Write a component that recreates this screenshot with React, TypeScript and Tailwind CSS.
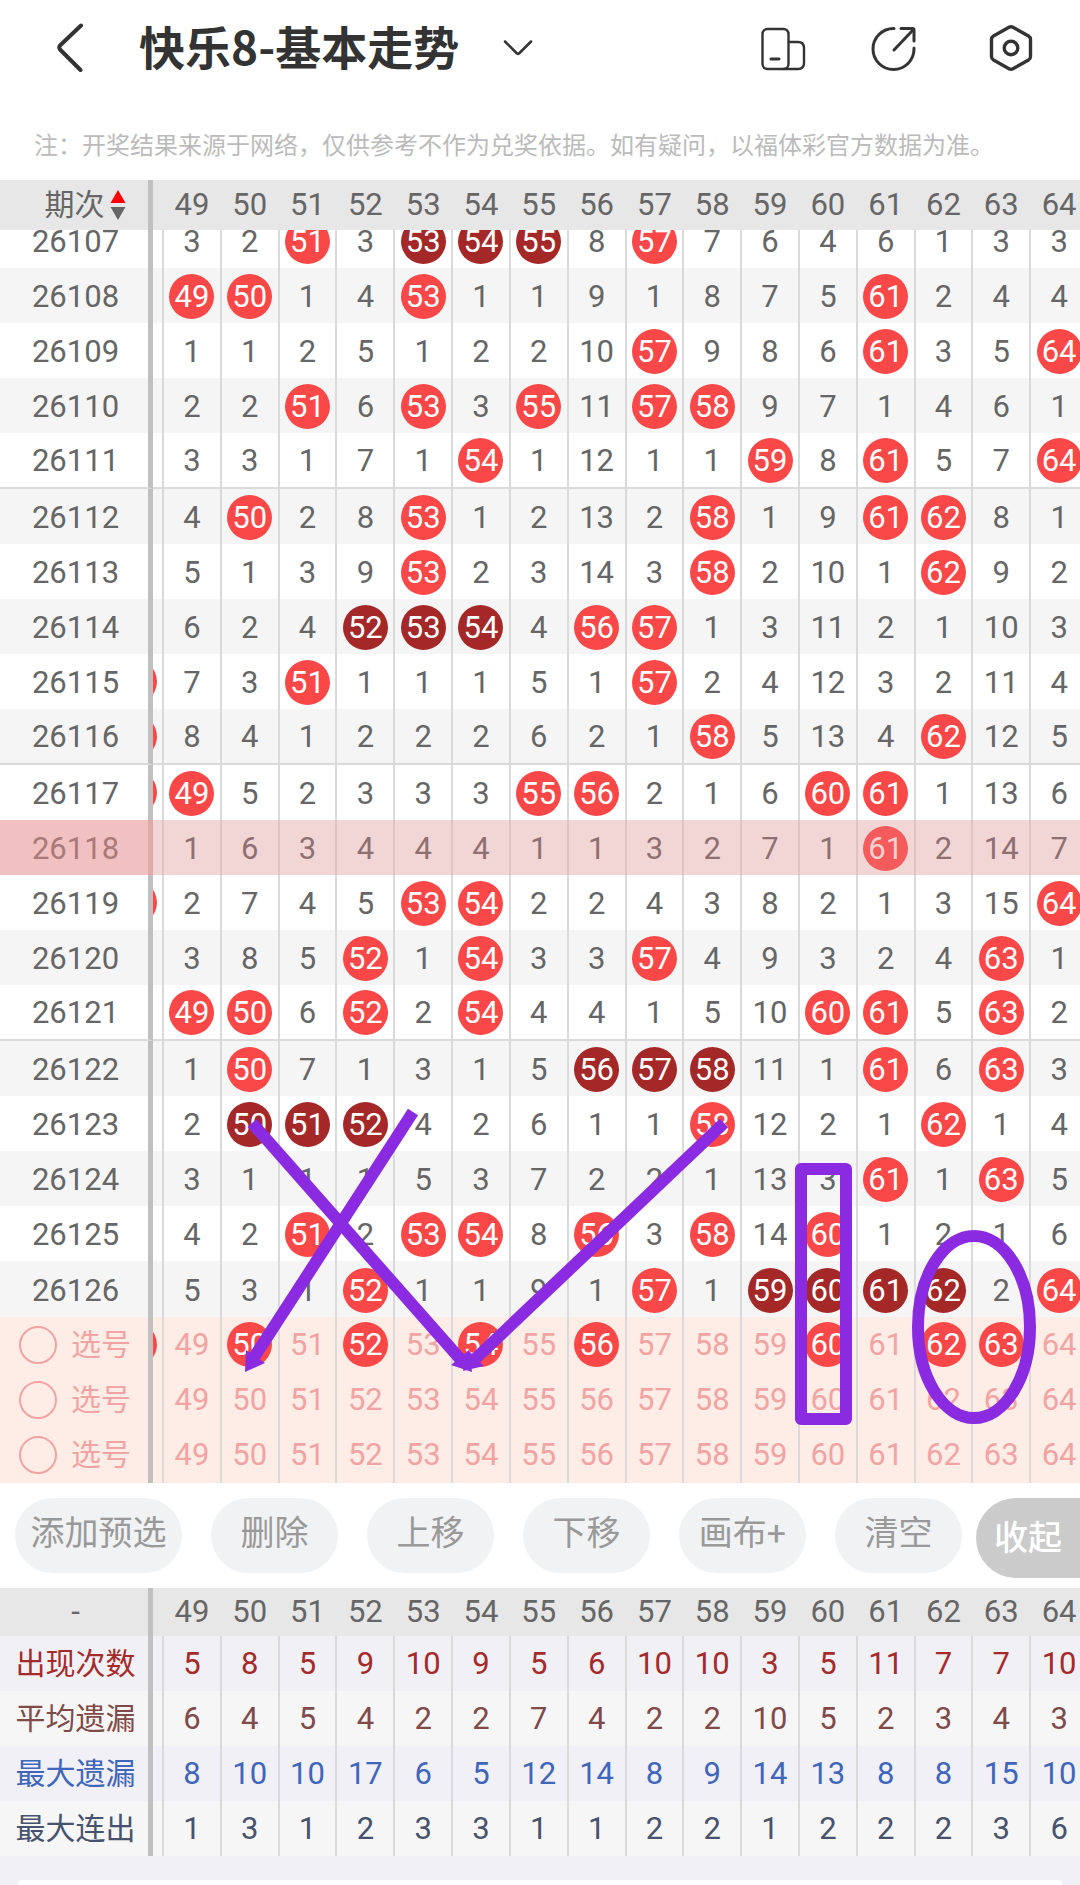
import { useState } from "react";
import clsx from "clsx";

const COLUMNS = [49, 50, 51, 52, 53, 54, 55, 56, 57, 58, 59, 60, 61, 62, 63, 64];

type Draw = { issue: string; cells: string; prevHit?: boolean };

// R = drawn number, D = drawn as part of a run of three or more
const DRAWS: Draw[] = [
  { issue: "26107", cells: "3 2 R 3 D D D 8 R 7 6 4 6 1 3 3" },
  { issue: "26108", cells: "R R 1 4 R 1 1 9 1 8 7 5 R 2 4 4" },
  { issue: "26109", cells: "1 1 2 5 1 2 2 10 R 9 8 6 R 3 5 R" },
  { issue: "26110", cells: "2 2 R 6 R 3 R 11 R R 9 7 1 4 6 1" },
  { issue: "26111", cells: "3 3 1 7 1 R 1 12 1 1 R 8 R 5 7 R" },
  { issue: "26112", cells: "4 R 2 8 R 1 2 13 2 R 1 9 R R 8 1" },
  { issue: "26113", cells: "5 1 3 9 R 2 3 14 3 R 2 10 1 R 9 2" },
  { issue: "26114", cells: "6 2 4 D D D 4 R R 1 3 11 2 1 10 3" },
  { issue: "26115", cells: "7 3 R 1 1 1 5 1 R 2 4 12 3 2 11 4", prevHit: true },
  { issue: "26116", cells: "8 4 1 2 2 2 6 2 1 R 5 13 4 R 12 5", prevHit: true },
  { issue: "26117", cells: "R 5 2 3 3 3 R R 2 1 6 R R 1 13 6", prevHit: true },
  { issue: "26118", cells: "1 6 3 4 4 4 1 1 3 2 7 1 R 2 14 7" },
  { issue: "26119", cells: "2 7 4 5 R R 2 2 4 3 8 2 1 3 15 R", prevHit: true },
  { issue: "26120", cells: "3 8 5 R 1 R 3 3 R 4 9 3 2 4 R 1" },
  { issue: "26121", cells: "R R 6 R 2 R 4 4 1 5 10 R R 5 R 2" },
  { issue: "26122", cells: "1 R 7 1 3 1 5 D D D 11 1 R 6 R 3" },
  { issue: "26123", cells: "2 D D D 4 2 6 1 1 R 12 2 1 R 1 4" },
  { issue: "26124", cells: "3 1 1 1 5 3 7 2 2 1 13 3 R 1 R 5" },
  { issue: "26125", cells: "4 2 R 2 R R 8 R 3 R 14 R 1 2 1 6" },
  { issue: "26126", cells: "5 3 1 R 1 1 9 1 R 1 D D D D 2 R" },
];

const STATS = [
  { label: "出现次数", color: "text-[#a52a2a]", bg: "bg-[#f1f0f5]", values: [5, 8, 5, 9, 10, 9, 5, 6, 10, 10, 3, 5, 11, 7, 7, 10] },
  { label: "平均遗漏", color: "text-[#804a48]", bg: "bg-[#f6f6f6]", values: [6, 4, 5, 4, 2, 2, 7, 4, 2, 2, 10, 5, 2, 3, 4, 3] },
  { label: "最大遗漏", color: "text-[#3f66ba]", bg: "bg-[#f0f0f6]", values: [8, 10, 10, 17, 6, 5, 12, 14, 8, 9, 14, 13, 8, 8, 15, 10] },
  { label: "最大连出", color: "text-[#48526c]", bg: "bg-[#f6f6f6]", values: [1, 3, 1, 2, 3, 3, 1, 1, 2, 2, 1, 2, 2, 2, 3, 6] },
];

const ACTIONS = ["删除", "上移", "下移", "画布+", "清空"];

const HIGHLIGHTED = "26118";

const TABLE = "w-[calc(100%+7px)] table-fixed border-separate border-spacing-0 text-center text-[31px] leading-9";

const ColGroup = () => (
  <colgroup>
    <col className="w-[153px]" />
    <col className="w-[9px]" />
    {COLUMNS.map((n) => (
      <col key={n} />
    ))}
  </colgroup>
);

const Ball = ({ n, dark, faded }: { n: number; dark?: boolean; faded?: boolean }) => (
  <span
    className={clsx(
      "flex size-[45px] shrink-0 items-center justify-center rounded-full",
      dark ? "bg-[#a52828]" : faded ? "bg-[#f35b5c]" : "bg-[#fa4848]",
      faded ? "text-[#fad0d0]" : "text-white"
    )}
  >
    {n}
  </span>
);

// Right edge of the ball in column 48, which is scrolled under the first column
const PrevBall = () => (
  <div className="flex justify-end overflow-hidden pr-[5px]">
    <span className="size-[45px] shrink-0 rounded-full bg-[#fa4848]" />
  </div>
);

const Header = () => (
  <header className="flex h-24 items-center justify-between pr-[46px] pl-[54px] text-[#333]">
    <div className="flex items-center">
      <button type="button" aria-label="返回">
        <svg width="32" height="50" viewBox="0 0 32 50" fill="none" stroke="currentColor" strokeWidth="4" strokeLinecap="round" strokeLinejoin="round">
          <path d="M27 2.500L6 22.500Q4.500 24.500 6 26.500L26.500 47" />
        </svg>
      </button>
      <h1 className="ml-[53px] pb-[6px] text-[46px] leading-[60px] font-bold">快乐8-基本走势</h1>
      <button type="button" aria-label="切换走势" className="ml-11">
        <svg width="30" height="18" viewBox="0 0 30 18" fill="none" stroke="currentColor" strokeWidth="2.500" strokeLinecap="round" strokeLinejoin="round">
          <path d="M2 2.500L14 14.500Q15 15.300 16 14.500L28 2.500" />
        </svg>
      </button>
    </div>
    <div className="flex items-center gap-16">
      <button type="button" aria-label="横屏">
        <svg width="46" height="48" viewBox="0 0 46 48" fill="none" stroke="currentColor" strokeWidth="2.400" strokeLinecap="round">
          <rect x="2.500" y="5" width="26" height="40" rx="5" />
          <path d="M29 18H38Q44 18 44 24V39Q44 45 38 45H24" />
          <path d="M11 35H19" strokeWidth="3" />
        </svg>
      </button>
      <button type="button" aria-label="分享">
        <svg width="46" height="48" viewBox="0 0 46 48" fill="none" stroke="currentColor" strokeWidth="3" strokeLinecap="round" strokeLinejoin="round">
          <path d="M24 4.500H23.500A20.500 20.500 0 1 0 44 25V24" />
          <path d="M31 4.500H42.500Q44 4.500 44 6V17" />
          <path d="M43 6L24 26" />
        </svg>
      </button>
      <button type="button" aria-label="设置" className="ml-2">
        <svg width="46" height="48" viewBox="0 0 46 48" fill="none" stroke="currentColor" strokeWidth="3.400" strokeLinejoin="round">
          <path d="M21 3.300Q23 2.200 25 3.300L40.500 12Q42.500 13.200 42.500 15.500V32.500Q42.500 34.800 40.500 36L25 44.700Q23 45.800 21 44.700L5.500 36Q3.500 34.800 3.500 32.500V15.500Q3.500 13.200 5.500 12Z" />
          <circle cx="23" cy="24" r="6.800" />
        </svg>
      </button>
    </div>
  </header>
);

const TrendRow = ({ draw, index }: { draw: Draw; index: number }) => {
  const active = draw.issue === HIGHLIGHTED;
  const groupEnd = index % 5 === 4;
  const ruled = groupEnd && index < DRAWS.length - 1;
  // the first row is partly scrolled under the header
  const height = index === 0 ? "h-[38px]" : ruled ? "h-[54px]" : groupEnd ? "h-14" : "h-[55px]";
  const rule = ruled && "border-b-2 border-b-[#dadada]";

  return (
    <tr className={clsx(active ? "bg-[#f2d6d6] text-[#8f7072]" : index % 2 ? "bg-[#f5f5f5]" : "bg-white")}>
      <th
        scope="row"
        className={clsx(
          "border-r-[5px] p-0 pl-[3px] font-normal",
          active ? "border-r-[#dea9a9] bg-[#f1c0c0] text-[#a87a7a]" : "border-r-[#c0c0c0]",
          rule
        )}
      >
        <div className={clsx("flex items-end justify-center overflow-hidden", height)}>
          <span className="flex h-[53px] shrink-0 items-center">{draw.issue}</span>
        </div>
      </th>
      <td className={clsx("p-0", rule)}>{draw.prevHit && <PrevBall />}</td>
      {draw.cells.split(" ").map((value, i) => (
        <td key={COLUMNS[i]} className={clsx("border-l-2 p-0", active ? "border-l-[#dfc2c2]" : "border-l-[#dadada]", rule)}>
          <div className={clsx("flex items-end justify-center overflow-hidden", height)}>
            <span className="flex h-[53px] shrink-0 items-center">
              {value === "R" || value === "D" ? <Ball n={COLUMNS[i]} dark={value === "D"} faded={active} /> : value}
            </span>
          </div>
        </td>
      ))}
    </tr>
  );
};

const PickRow = ({ index, picked, onToggle }: { index: number; picked: number[]; onToggle: (n: number) => void }) => (
  <tr className="bg-[#feede6] text-[#f2a3a3]">
    <th scope="row" className={clsx("border-r-[5px] border-r-[#c0c0c0] p-0 font-normal", index === 2 ? "h-14" : "h-[55px]")}>
      <label className="flex items-center gap-[14px] pl-[19px] text-[30px]">
        <input type="radio" name="pick" className="size-[38px] appearance-none rounded-full border-2 border-[#f2a3a3]" />
        选号
      </label>
    </th>
    <td className="p-0">{index === 0 && <PrevBall />}</td>
    {COLUMNS.map((n) => (
      <td key={n} className="border-l-2 border-l-[#dadada] p-0">
        <button type="button" className="flex w-full items-center justify-center" onClick={() => onToggle(n)}>
          {picked.includes(n) ? <Ball n={n} /> : n}
        </button>
      </td>
    ))}
  </tr>
);

// Lines drawn by hand on the canvas above the chart
const Annotations = () => (
  <svg className="pointer-events-none absolute inset-0 size-full" fill="none" stroke="#8a2be2" strokeWidth="12" aria-hidden="true">
    <path d="M252 943L462 1181" />
    <path d="M413 932L253 1179" />
    <path d="M724 943L473 1181" />
    <g fill="#8a2be2" stroke="none">
      <path d="M472 1192L451 1185L469 1170Z" />
      <path d="M245 1192L246 1170L265 1183Z" />
      <path d="M463 1191L468 1170L484 1186Z" />
    </g>
    <rect x="801" y="989" width="45" height="250" strokeLinejoin="round" />
    <ellipse cx="974" cy="1147" rx="56" ry="91" />
  </svg>
);

const App = () => {
  const [picks, setPicks] = useState<number[][]>([[50, 52, 54, 56, 60, 62, 63], [], []]);

  const toggle = (row: number, n: number) =>
    setPicks((prev) => prev.map((p, i) => (i !== row ? p : p.includes(n) ? p.filter((x) => x !== n) : [...p, n])));

  return (
    <div className="flex min-h-screen flex-col overflow-hidden bg-[#f0f0f6] font-[Roboto,'Noto_Sans_CJK_SC',sans-serif] text-[#666]">
      <div className="bg-white font-['Noto_Sans_CJK_SC',sans-serif]">
        <Header />
        <p className="h-[84px] pt-[30px] pl-[34px] text-2xl leading-9 whitespace-nowrap text-[#bbb]">
          注：开奖结果来源于网络，仅供参考不作为兑奖依据。如有疑问，以福体彩官方数据为准。
        </p>
      </div>

      {/* Trend chart */}
      <div className="relative">
        <table className={TABLE}>
          <ColGroup />
          <thead>
            <tr className="h-[50px] bg-[#e7e7e7]">
              <th scope="col" className="border-r-[5px] border-r-[#c0c0c0] p-0 font-normal">
                <button type="button" className="mx-auto flex items-center gap-[5px] pl-[22px] text-[30px]">
                  期次
                  <svg width="16" height="32" viewBox="0 0 16 32" className="shrink-0">
                    <path d="M8 1L15.500 14H0.500Z" fill="#f00" />
                    <path d="M8 31L15.500 18H0.500Z" fill="#666" />
                  </svg>
                </button>
              </th>
              <td className="p-0" />
              {COLUMNS.map((n) => (
                <th key={n} scope="col" className="border-l-2 border-l-transparent p-0 font-normal">
                  {n}
                </th>
              ))}
            </tr>
          </thead>
          <tbody>
            {DRAWS.map((draw, i) => (
              <TrendRow key={draw.issue} draw={draw} index={i} />
            ))}
            {picks.map((picked, i) => (
              <PickRow key={i} index={i} picked={picked} onToggle={(n) => toggle(i, n)} />
            ))}
          </tbody>
        </table>
        <Annotations />
      </div>

      {/* Actions */}
      <div className="flex h-[105px] items-start justify-between bg-white pt-[15px] pl-[15px] text-[34px] text-[#999]">
        <div className="flex gap-[29px]">
          <button type="button" className="h-[75px] w-[167px] rounded-full bg-[#f1f2f4] pb-1 whitespace-nowrap">
            添加预选
          </button>
          {ACTIONS.map((name) => (
            <button key={name} type="button" className="h-[75px] w-[127px] rounded-full bg-[#f1f2f4] pb-1 whitespace-nowrap">
              {name}
            </button>
          ))}
        </div>
        <button type="button" className="h-20 w-[104px] rounded-l-full bg-[#cbcbcb] font-medium whitespace-nowrap text-white">
          收起
        </button>
      </div>

      {/* Statistics */}
      <table className={TABLE}>
        <ColGroup />
        <thead>
          <tr className="h-12 bg-[#e7e7e7]">
            <th scope="col" className="border-r-[5px] border-r-[#c0c0c0] p-0 pl-[3px] font-normal">
              -
            </th>
            <td className="p-0" />
            {COLUMNS.map((n) => (
              <th key={n} scope="col" className="border-l-2 border-l-transparent p-0 font-normal">
                {n}
              </th>
            ))}
          </tr>
        </thead>
        <tbody>
          {STATS.map((stat) => (
            <tr key={stat.label} className={clsx("h-[55px]", stat.bg, stat.color)}>
              <th scope="row" className="border-r-[5px] border-r-[#c0c0c0] p-0 pl-[3px] text-[30px] font-normal">
                {stat.label}
              </th>
              <td className="p-0" />
              {stat.values.map((value, i) => (
                <td key={COLUMNS[i]} className="border-l-2 border-l-[#dadada] p-0">
                  {value}
                </td>
              ))}
            </tr>
          ))}
        </tbody>
      </table>

      <div className="mx-[18px] mt-6 flex-1 rounded-t-3xl bg-white" />
    </div>
  );
};

export default App;
